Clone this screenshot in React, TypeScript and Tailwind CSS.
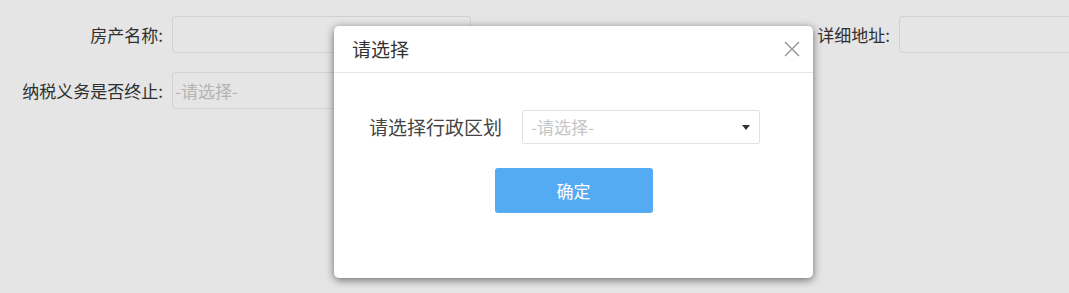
const font = { fontFamily: '"Noto Sans CJK SC", "Noto Sans", sans-serif' };

function Field({ label, placeholder }: { label: string; placeholder?: string }) {
  return (
    <div className="flex items-center">
      <label className="w-[172px] shrink-0 pr-[9px] text-right text-[17px] text-[#2f2f2f]">{label}</label>
      <div className="flex h-[37px] w-[299px] shrink-0 items-center rounded-[3px] border border-[#d2d2d2] px-[2px] text-[17px] text-[#b4b4b4]">
        {placeholder}
      </div>
    </div>
  );
}

export default function App() {
  return (
    <div className="relative h-[293px] w-[1069px] overflow-hidden bg-[#e5e5e5]" style={font}>
      <div className="flex flex-col gap-[19px] pt-[16px]">
        <div className="flex items-center">
          <Field label="房产名称:" />
          <div className="ml-[256px] flex items-center">
            <label className="w-[172px] shrink-0 pr-[9px] text-right text-[17px] text-[#2f2f2f]">详细地址:</label>
            <div className="h-[37px] w-[299px] shrink-0 rounded-[3px] border border-[#d2d2d2]" />
          </div>
        </div>
        <Field label="纳税义务是否终止:" placeholder="-请选择-" />
      </div>

      <div className="absolute left-[334px] top-[26px] flex h-[252px] w-[479px] flex-col rounded-[5px] bg-white shadow-[0_2px_8px_rgba(0,0,0,0.55)]">
        <div className="flex h-[47px] shrink-0 items-center justify-between border-b border-[#e6e6e6] pl-[18px] pr-[12px]">
          <span className="text-[19px] text-[#333]">请选择</span>
          <svg width="18" height="18" viewBox="0 0 18 18" className="text-[#9a9a9a]">
            <path d="M2 2 L16 16 M16 2 L2 16" stroke="currentColor" strokeWidth="1.5" fill="none" />
          </svg>
        </div>
        <div className="flex flex-col pt-[37px]">
          <div className="flex items-center pl-[35px]">
            <span className="w-[153px] shrink-0 text-[19px] text-[#444]">请选择行政区划</span>
            <div className="flex h-[34px] w-[238px] items-center justify-between rounded-[2px] border border-[#e2e2e2] pl-[8px] pr-[9px] text-[17px] text-[#c6c6c6]">
              <span>-请选择-</span>
              <svg width="8" height="5" viewBox="0 0 8 5">
                <path d="M0 0 H8 L4 5 Z" fill="#333" />
              </svg>
            </div>
          </div>
          <button className="mx-auto mt-[24px] flex h-[45px] w-[158px] items-center justify-center rounded-[3px] bg-[#55abf3] text-[17px] text-white">
            确定
          </button>
        </div>
      </div>
    </div>
  );
}
